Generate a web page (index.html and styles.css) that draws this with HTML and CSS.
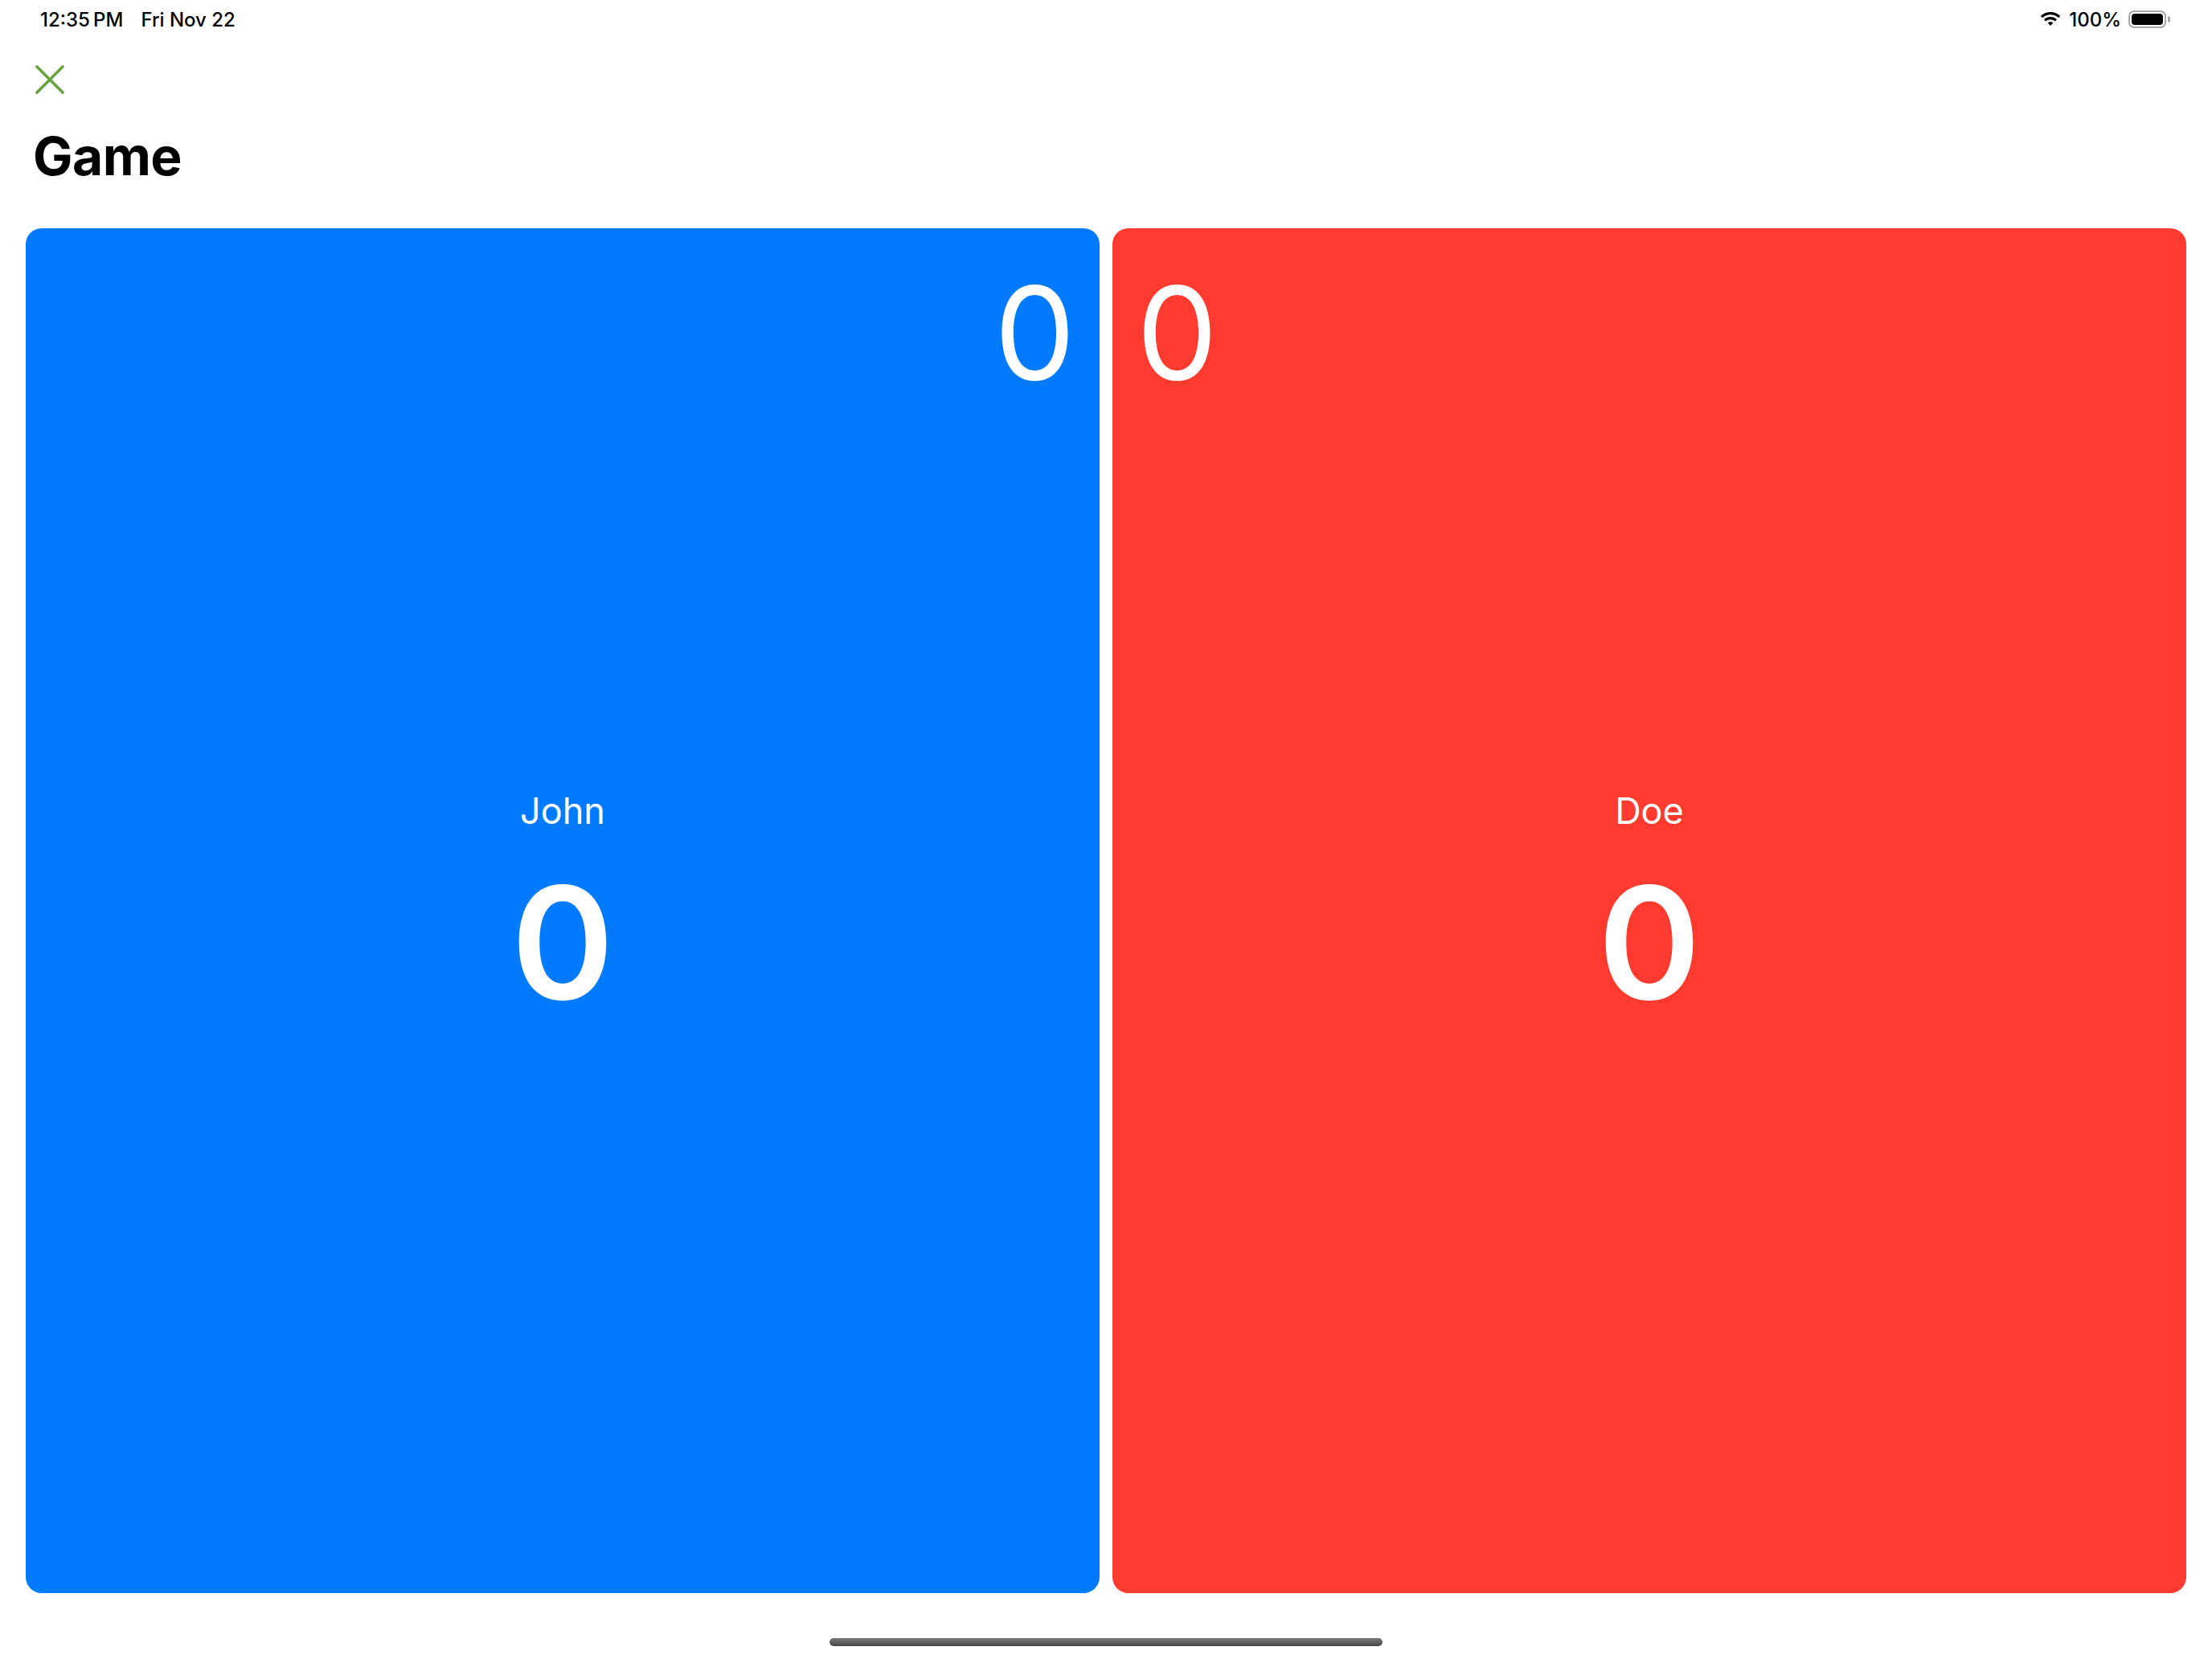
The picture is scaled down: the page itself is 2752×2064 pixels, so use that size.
FILE: index.html
```html
<!DOCTYPE html>
<html lang="en">
<head>
    <meta charset="UTF-8">
    <meta name="viewport" content="width=device-width, initial-scale=1.0">
    <title>Game</title>
    <link rel="stylesheet" href="styles.css">
</head>
<body>
    <div class="screen">
        <div class="status-bar">
            <div class="status-left">
                <span>12:35&#8201;PM</span>
                <span>Fri Nov 22</span>
            </div>
            <div class="status-right">
                <svg class="wifi" width="28" height="20" viewBox="0 0 28 20">
                    <path d="M14 4.2c3.9 0 7.4 1.5 10 4l2.2-2.3C23 2.8 18.7 1 14 1S5 2.8 1.8 5.9L4 8.2c2.6-2.5 6.1-4 10-4z" fill="#000"/>
                    <path d="M14 10.3c2.3 0 4.3.9 5.8 2.3l2.2-2.3c-2.1-2-5-3.2-8-3.2s-5.900 1.2-8 3.2l2.2 2.3c1.5-1.4 3.5-2.3 5.8-2.3z" fill="#000"/>
                    <path d="M14 13.2c1.3 0 2.4.5 3.3 1.3L14 18l-3.3-3.5c.9-.8 2-1.3 3.3-1.3z" fill="#000"/>
                </svg>
                <span>100%</span>
                <div class="battery">
                    <div class="battery-body"><div class="battery-level"></div></div>
                    <div class="battery-nub"></div>
                </div>
            </div>
        </div>

        <div class="toolbar">
            <button class="close-button" aria-label="Close">
                <svg width="36" height="36" viewBox="0 0 36 36">
                    <path d="M2 2L34 34M34 2L2 34" stroke="#65a33f" stroke-width="3.6" stroke-linecap="round"/>
                </svg>
            </button>
        </div>

        <h1 class="title">Game</h1>

        <div class="players">
            <div class="player blue">
                <div class="corner-score right">0</div>
                <div class="player-center">
                    <div class="player-name">John</div>
                    <div class="player-score">0</div>
                </div>
            </div>
            <div class="player red">
                <div class="corner-score left">0</div>
                <div class="player-center">
                    <div class="player-name">Doe</div>
                    <div class="player-score">0</div>
                </div>
            </div>
        </div>

        <div class="home-area">
            <div class="home-indicator"></div>
        </div>
    </div>
</body>
</html>
```

FILE: styles.css
```css
* {
    box-sizing: border-box;
}

body {
    font-family: Inter, "Noto Sans", sans-serif;
    margin: 0;
    padding: 0;
    background-color: #fff;
    color: #000;
}

.screen {
    height: 100vh;
    display: flex;
    flex-direction: column;
}

/* status bar */
.status-bar {
    height: 48px;
    display: flex;
    justify-content: space-between;
    align-items: center;
    padding: 0 52px 0 50px;
    font-size: 24px;
    font-weight: 500;
}

.status-left {
    display: flex;
    gap: 22px;
}

.status-right {
    display: flex;
    align-items: center;
    gap: 9px;
}

.battery {
    display: flex;
    align-items: center;
    gap: 2px;
}

.battery-body {
    width: 47px;
    height: 22px;
    border: 2px solid #a7a7a7;
    border-radius: 7px;
    padding: 2px;
}

.battery-level {
    width: 100%;
    height: 100%;
    background-color: #000;
    border-radius: 4px;
}

.battery-nub {
    width: 3px;
    height: 8px;
    background-color: #a7a7a7;
    border-radius: 0 3px 3px 0;
}

/* nav */
.toolbar {
    height: 106px;
    padding: 33px 0 0 44px;
}

.close-button {
    border: none;
    background: none;
    padding: 0;
    width: 36px;
    height: 36px;
    cursor: pointer;
}

.title {
    margin: 0;
    padding: 0 0 0 41px;
    font-size: 66px;
    font-weight: 700;
    line-height: 80px;
    letter-spacing: -0.6px;
}

/* score panels */
.players {
    flex: 1;
    display: flex;
    gap: 16px;
    padding: 50px 32px 0;
}

.player {
    flex: 1;
    display: grid;
    border-radius: 20px;
    color: #fff;
}

.player.blue {
    background-color: #007aff;
}

.player.red {
    background-color: #ff3b30;
}

.corner-score,
.player-center {
    grid-area: 1 / 1;
}

.corner-score {
    align-self: start;
    font-size: 160px;
    font-weight: 400;
    line-height: 1;
    margin-top: 50px;
}

.corner-score.right {
    justify-self: end;
    margin-right: 30px;
}

.corner-score.left {
    justify-self: start;
    margin-left: 30px;
}

.player-center {
    align-self: center;
    justify-self: center;
    display: flex;
    flex-direction: column;
    align-items: center;
    margin-bottom: 16px;
}

.player-name {
    font-size: 45px;
    font-weight: 400;
    line-height: 56px;
}

.player-score {
    font-size: 194px;
    font-weight: 600;
    line-height: 1;
    margin-top: 39px;
}

.home-area {
    height: 82px;
    display: flex;
    justify-content: center;
    padding-top: 56px;
}

.home-indicator {
    width: 688px;
    height: 10px;
    border-radius: 5px;
    background: linear-gradient(#7a7a7a, #474747);
}
```
